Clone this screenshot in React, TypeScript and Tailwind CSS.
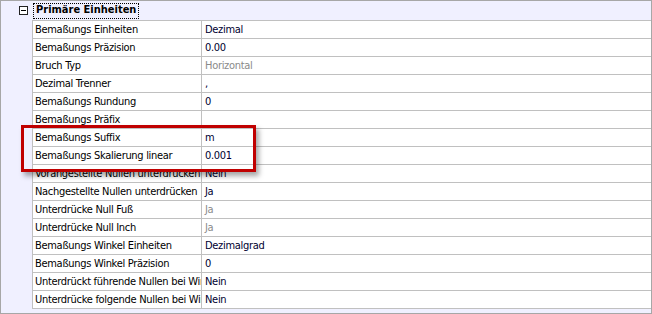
const rows: { name: string; value: string; disabled?: boolean }[] = [
  { name: "Bemaßungs Einheiten", value: "Dezimal" },
  { name: "Bemaßungs Präzision", value: "0.00" },
  { name: "Bruch Typ", value: "Horizontal", disabled: true },
  { name: "Dezimal Trenner", value: "," },
  { name: "Bemaßungs Rundung", value: "0" },
  { name: "Bemaßungs Präfix", value: "" },
  { name: "Bemaßungs Suffix", value: "m" },
  { name: "Bemaßungs Skalierung linear", value: "0.001" },
  { name: "Vorangestellte Nullen unterdrücken", value: "Nein" },
  { name: "Nachgestellte Nullen unterdrücken", value: "Ja" },
  { name: "Unterdrücke Null Fuß", value: "Ja", disabled: true },
  { name: "Unterdrücke Null Inch", value: "Ja", disabled: true },
  { name: "Bemaßungs Winkel Einheiten", value: "Dezimalgrad" },
  { name: "Bemaßungs Winkel Präzision", value: "0" },
  { name: "Unterdrückt führende Nullen bei Winkeln", value: "Nein" },
  { name: "Unterdrücke folgende Nullen bei Winkeln", value: "Nein" },
];

export default function App() {
  return (
    <div
      className="relative w-[652px] h-[314px] border border-[#a7a7a7] bg-[#f0f0ff] text-[11px] text-black overflow-hidden"
      style={{ fontFamily: "'DejaVu Sans Condensed', 'DejaVu Sans', sans-serif", fontStretch: "condensed" }}
    >
      {/* Category header */}
      <div className="flex items-center h-[19px]">
        <div className="ml-[18px] w-[9px] h-[9px] border border-[#222] bg-white flex items-center justify-center">
          <div className="w-[5px] h-px bg-black" />
        </div>
        <div className="ml-[5px] px-[2px] h-[16px] flex items-center border border-dotted border-black font-bold">
          Primäre Einheiten
        </div>
      </div>

      {/* Property grid */}
      <div className="ml-[31px] border-t border-l border-[#c0c0c0] bg-white tracking-[-0.3px]">
        {rows.map((r) => (
          <div key={r.name} className="flex h-[18px] border-b border-[#c0c0c0]">
            <div className="w-[169px] shrink-0 pl-[2px] leading-[17px] whitespace-nowrap overflow-hidden border-r border-[#c0c0c0]">
              {r.name}
            </div>
            <div className={`pl-[3px] leading-[17px] whitespace-nowrap ${r.disabled ? "text-[#8a8a8a]" : "text-[#000030]"}`}>
              {r.value}
            </div>
          </div>
        ))}
      </div>

      {/* Highlight annotation */}
      <div className="absolute left-[20px] top-[124px] w-[235px] h-[47px] border-[3px] border-[#c00000] shadow-[3px_4px_5px_rgba(0,0,0,0.35)]" />
    </div>
  );
}
